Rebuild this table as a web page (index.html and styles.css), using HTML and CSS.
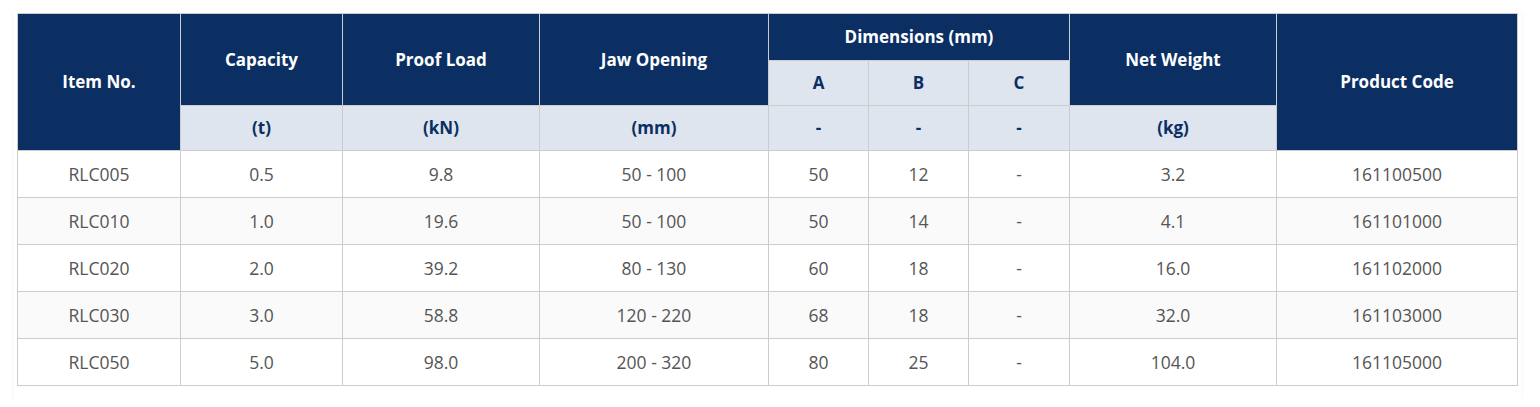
FILE: index.html
```html
<!DOCTYPE html>
<html lang="en">
<head>
<meta charset="utf-8">
<title>Specifications</title>
<link rel="stylesheet" href="styles.css">
</head>
<body>
<div class="wrap">
<table class="spec">
<colgroup>
<col class="c-item"><col class="c-cap"><col class="c-proof"><col class="c-jaw"><col class="c-a"><col class="c-b"><col class="c-c"><col class="c-wt"><col class="c-code">
</colgroup>
<thead>
<tr class="h1">
<th class="dark" rowspan="3">Item No.</th>
<th class="dark" rowspan="2">Capacity</th>
<th class="dark" rowspan="2">Proof Load</th>
<th class="dark" rowspan="2">Jaw Opening</th>
<th class="dark" colspan="3">Dimensions (mm)</th>
<th class="dark" rowspan="2">Net Weight</th>
<th class="dark" rowspan="3">Product Code</th>
</tr>
<tr class="h2">
<th class="light">A</th>
<th class="light">B</th>
<th class="light">C</th>
</tr>
<tr class="h3">
<th class="light">(t)</th>
<th class="light">(kN)</th>
<th class="light">(mm)</th>
<th class="light">-</th>
<th class="light">-</th>
<th class="light">-</th>
<th class="light">(kg)</th>
</tr>
</thead>
<tbody>
<tr><td>RLC005</td><td>0.5</td><td>9.8</td><td>50 - 100</td><td>50</td><td>12</td><td>-</td><td>3.2</td><td>161100500</td></tr>
<tr><td>RLC010</td><td>1.0</td><td>19.6</td><td>50 - 100</td><td>50</td><td>14</td><td>-</td><td>4.1</td><td>161101000</td></tr>
<tr><td>RLC020</td><td>2.0</td><td>39.2</td><td>80 - 130</td><td>60</td><td>18</td><td>-</td><td>16.0</td><td>161102000</td></tr>
<tr><td>RLC030</td><td>3.0</td><td>58.8</td><td>120 - 220</td><td>68</td><td>18</td><td>-</td><td>32.0</td><td>161103000</td></tr>
<tr><td>RLC050</td><td>5.0</td><td>98.0</td><td>200 - 320</td><td>80</td><td>25</td><td>-</td><td>104.0</td><td>161105000</td></tr>
</tbody>
</table>
</div>
</body>
</html>
```
FILE: styles.css
```css
html, body {
  margin: 0;
  padding: 0;
  background: #ffffff;
}
body {
  font-family: "Open Sans", "Noto Sans", "Liberation Sans", sans-serif;
}
.wrap {
  margin: 10px 19px 0 14px;
  padding: 3px 3px 13px 3px;
  box-shadow: 0 2px 6px rgba(0, 0, 0, 0.05);
  width: 1501px;
}
.spec {
  border-collapse: collapse;
  table-layout: fixed;
  width: 1501px;
  font-size: 17.5px;
}
.c-item { width: 163px; }
.c-cap { width: 162px; }
.c-proof { width: 197px; }
.c-jaw { width: 229px; }
.c-a { width: 100px; }
.c-b { width: 100px; }
.c-c { width: 101px; }
.c-wt { width: 207px; }
.c-code { width: 241px; }
.spec th, .spec td {
  border: 1px solid #cccccc;
  text-align: center;
  vertical-align: middle;
  padding: 0 8px;
  line-height: 24px;
}
.spec th {
  font-weight: 700;
  font-size: 17px;
}
.h1 { height: 47px; }
.h2 { height: 45px; }
.h3 { height: 45px; }
.dark {
  background: #0b2f63;
  color: #ffffff;
}
.light {
  background: #dfe5ee;
  color: #0b2f63;
}
.spec td {
  height: 46px;
  color: #555555;
  background: #ffffff;
}
.spec tbody tr:nth-child(even) td {
  background: #fafafa;
}
```
